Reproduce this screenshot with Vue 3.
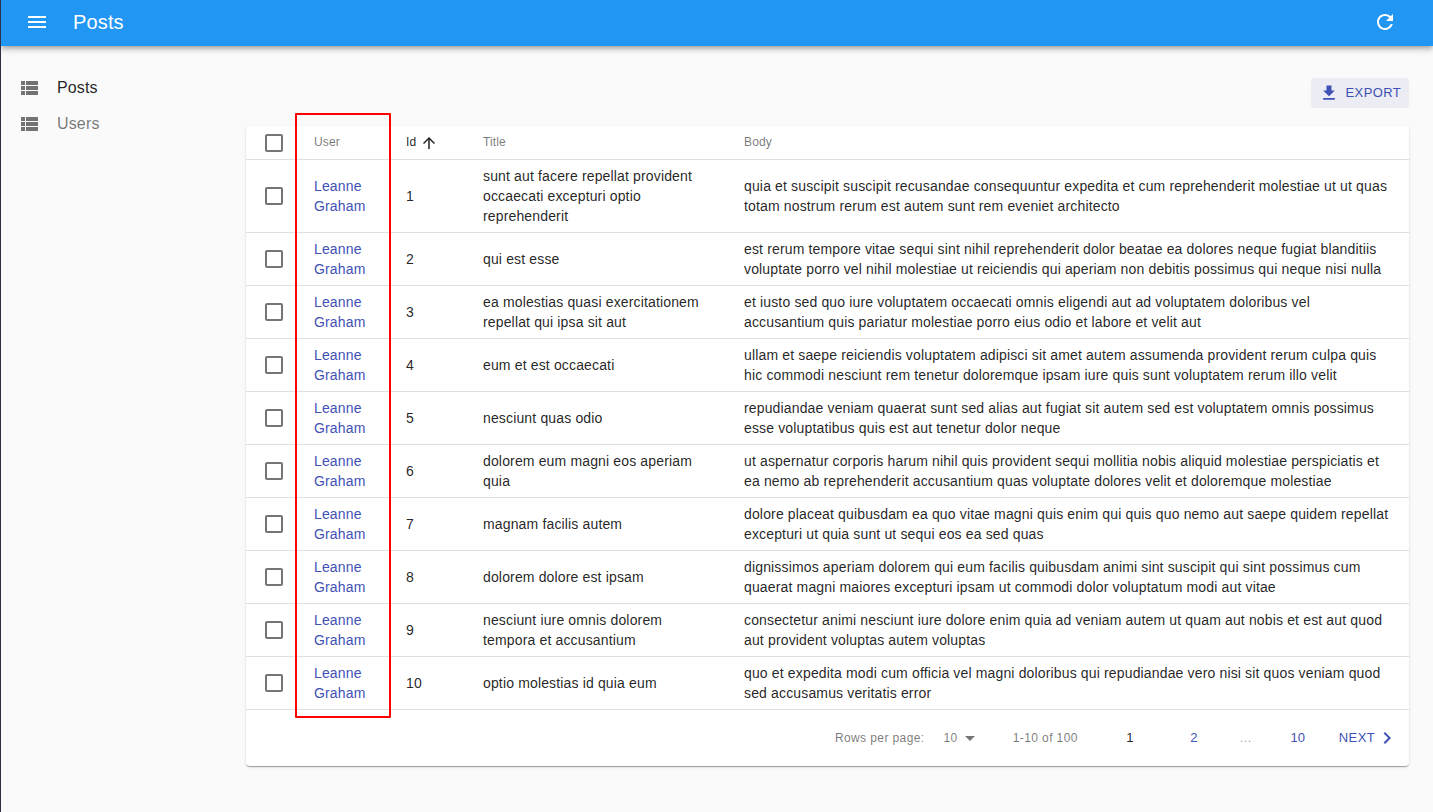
<script setup>
const posts = [
  { id: 1, title: 'sunt aut facere repellat provident occaecati excepturi optio reprehenderit', body: 'quia et suscipit suscipit recusandae consequuntur expedita et cum reprehenderit molestiae ut ut quas totam nostrum rerum est autem sunt rem eveniet architecto' },
  { id: 2, title: 'qui est esse', body: 'est rerum tempore vitae sequi sint nihil reprehenderit dolor beatae ea dolores neque fugiat blanditiis voluptate porro vel nihil molestiae ut reiciendis qui aperiam non debitis possimus qui neque nisi nulla' },
  { id: 3, title: 'ea molestias quasi exercitationem repellat qui ipsa sit aut', body: 'et iusto sed quo iure voluptatem occaecati omnis eligendi aut ad voluptatem doloribus vel accusantium quis pariatur molestiae porro eius odio et labore et velit aut' },
  { id: 4, title: 'eum et est occaecati', body: 'ullam et saepe reiciendis voluptatem adipisci sit amet autem assumenda provident rerum culpa quis hic commodi nesciunt rem tenetur doloremque ipsam iure quis sunt voluptatem rerum illo velit' },
  { id: 5, title: 'nesciunt quas odio', body: 'repudiandae veniam quaerat sunt sed alias aut fugiat sit autem sed est voluptatem omnis possimus esse voluptatibus quis est aut tenetur dolor neque' },
  { id: 6, title: 'dolorem eum magni eos aperiam quia', body: 'ut aspernatur corporis harum nihil quis provident sequi mollitia nobis aliquid molestiae perspiciatis et ea nemo ab reprehenderit accusantium quas voluptate dolores velit et doloremque molestiae' },
  { id: 7, title: 'magnam facilis autem', body: 'dolore placeat quibusdam ea quo vitae magni quis enim qui quis quo nemo aut saepe quidem repellat excepturi ut quia sunt ut sequi eos ea sed quas' },
  { id: 8, title: 'dolorem dolore est ipsam', body: 'dignissimos aperiam dolorem qui eum facilis quibusdam animi sint suscipit qui sint possimus cum quaerat magni maiores excepturi ipsam ut commodi dolor voluptatum modi aut vitae' },
  { id: 9, title: 'nesciunt iure omnis dolorem tempora et accusantium', body: 'consectetur animi nesciunt iure dolore enim quia ad veniam autem ut quam aut nobis et est aut quod aut provident voluptas autem voluptas' },
  { id: 10, title: 'optio molestias id quia eum', body: 'quo et expedita modi cum officia vel magni doloribus qui repudiandae vero nisi sit quos veniam quod sed accusamus veritatis error' },
]
const boxPath = 'M19 5v14H5V5h14m0-2H5c-1.1 0-2 .9-2 2v14c0 1.1.9 2 2 2h14c1.1 0 2-.9 2-2V5c0-1.1-.9-2-2-2z'
const listPath = 'M4 14h4v-4H4v4zm0 5h4v-4H4v4zM4 9h4V5H4v4zm5 5h12v-4H9v4zm0 5h12v-4H9v4zM9 5v4h12V5H9z'
const navItems = [
  { label: 'Posts', active: true },
  { label: 'Users', active: false },
]
</script>

<template>
  <div class="page">
    <header class="appbar">
      <svg class="menu-icon" viewBox="0 0 24 24" width="24" height="24"><path d="M3 18h18v-2H3v2zm0-5h18v-2H3v2zm0-7v2h18V6H3z" /></svg>
      <h1 class="appbar-title">Posts</h1>
      <svg class="refresh-icon" viewBox="0 0 24 24" width="24" height="24"><path d="M17.65 6.35C16.2 4.9 14.21 4 12 4c-4.42 0-7.99 3.58-7.99 8s3.57 8 7.99 8c3.73 0 6.84-2.55 7.73-6h-2.08c-.82 2.33-3.04 4-5.65 4-3.31 0-6-2.69-6-6s2.69-6 6-6c1.66 0 3.14.69 4.22 1.78L13 11h7V4l-2.35 2.35z" /></svg>
    </header>

    <div class="main">
      <nav class="sidebar">
        <div v-for="item in navItems" :key="item.label" class="nav-item" :class="{ active: item.active }">
          <svg viewBox="0 0 24 24" width="24" height="24"><path :d="listPath" /></svg>
          <span>{{ item.label }}</span>
        </div>
      </nav>

      <section class="content">
        <div class="actions">
          <button class="export">
            <svg viewBox="0 0 24 24" width="20" height="20"><path d="M19 9h-4V3H9v6H5l7 7 7-7zM5 18v2h14v-2H5z" /></svg>
            <span class="export-label">Export</span>
          </button>
        </div>

        <div class="card">
          <table>
            <colgroup>
              <col class="c-check" />
              <col class="c-user" />
              <col class="c-id" />
              <col class="c-title" />
              <col />
            </colgroup>
            <thead>
              <tr>
                <th class="check"><svg viewBox="0 0 24 24" width="24" height="24"><path :d="boxPath" /></svg></th>
                <th>User</th>
                <th class="sorted">
                  <span class="sort-label">Id<svg viewBox="0 0 24 24" width="18" height="18"><path d="M4 12l1.41 1.41L11 7.83V20h2V7.83l5.58 5.59L20 12l-8-8-8 8z" /></svg></span>
                </th>
                <th>Title</th>
                <th>Body</th>
              </tr>
            </thead>
            <tbody>
              <tr v-for="post in posts" :key="post.id">
                <td class="check"><svg viewBox="0 0 24 24" width="24" height="24"><path :d="boxPath" /></svg></td>
                <td class="user">Leanne Graham</td>
                <td>{{ post.id }}</td>
                <td>{{ post.title }}</td>
                <td class="body-cell">{{ post.body }}</td>
              </tr>
            </tbody>
          </table>

          <footer class="pager">
            <span class="rows-label">Rows per page:</span>
            <span class="rows-select">10<svg viewBox="0 0 24 24" width="24" height="24"><path d="M7 10l5 5 5-5z" /></svg></span>
            <span class="range">1-10 of 100</span>
            <button class="page-btn current">1</button>
            <button class="page-btn">2</button>
            <span class="ellipsis">...</span>
            <button class="page-btn">10</button>
            <button class="next">Next<svg viewBox="0 0 24 24" width="24" height="24"><path d="M10 6L8.59 7.41 13.17 12l-4.58 4.59L10 18l6-6z" /></svg></button>
          </footer>
        </div>
      </section>
    </div>

    <div class="highlight"></div>
  </div>
</template>

<style scoped>
.page {
  position: relative;
  height: 812px;
  overflow: hidden;
  box-sizing: border-box;
  border-left: 1px solid #2c2f45;
  background: #fafafa;
  font-family: "Liberation Sans", Arial, sans-serif;
  color: rgba(0, 0, 0, 0.87);
}
.appbar {
  position: relative;
  display: flex;
  align-items: center;
  box-sizing: border-box;
  height: 46px;
  padding: 0 36px 2px 24px;
  background: #2196f3;
  color: #fff;
  box-shadow: 0 2px 4px -1px rgba(0, 0, 0, 0.2), 0 4px 5px 0 rgba(0, 0, 0, 0.14), 0 1px 10px 0 rgba(0, 0, 0, 0.12);
}
.appbar svg { fill: #fff; flex: none; }
.appbar-title {
  margin: 0 0 0 24px;
  font-size: 20px;
  font-weight: 400;
  line-height: 1.4;
  letter-spacing: 0.0075em;
  flex: 1;
}
.main { display: flex; }
.sidebar {
  flex: none;
  width: 245px;
  padding-top: 24px;
  box-sizing: border-box;
}
.nav-item {
  display: flex;
  align-items: center;
  gap: 16px;
  height: 36px;
  padding-left: 16px;
  font-size: 16px;
  letter-spacing: 0.00938em;
  color: rgba(0, 0, 0, 0.54);
}
.nav-item.active { color: rgba(0, 0, 0, 0.87); }
.nav-item svg { fill: rgba(0, 0, 0, 0.54); flex: none; }
.content {
  flex: 1;
  min-width: 0;
  padding: 32px 24px 0 0;
}
.actions {
  display: flex;
  justify-content: flex-end;
  margin-bottom: 18px;
}
button {
  font-family: inherit;
  border: 0;
  background: none;
  cursor: pointer;
}
.export {
  display: flex;
  align-items: center;
  gap: 7px;
  height: 30px;
  padding: 0 8px;
  border-radius: 4px;
  background: rgba(63, 81, 181, 0.08);
  color: #3f51b5;
  font-size: 13px;
  letter-spacing: 0.02857em;
  text-transform: uppercase;
}
.export-label { margin-bottom: 2px; }
.export svg { fill: #3f51b5; }
.card {
  background: #fff;
  border-radius: 4px;
  box-shadow: 0 2px 1px -1px rgba(0, 0, 0, 0.2), 0 1px 1px 0 rgba(0, 0, 0, 0.14), 0 1px 3px 0 rgba(0, 0, 0, 0.12);
}
table {
  width: 100%;
  border-collapse: collapse;
  table-layout: fixed;
}
.c-check { width: 52px; }
.c-user { width: 92px; }
.c-id { width: 77px; }
.c-title { width: 261px; }
th, td {
  padding: 6px 16px;
  border-bottom: 1px solid #e0e0e0;
  text-align: left;
  vertical-align: middle;
  font-size: 14px;
  line-height: 20px;
  font-weight: 400;
  letter-spacing: 0.01071em;
}
th {
  padding: 6px 16px 7px;
  font-size: 12px;
  color: rgba(0, 0, 0, 0.54);
}
th.sorted { color: rgba(0, 0, 0, 0.87); }
.sort-label { display: inline-flex; align-items: center; gap: 4px; vertical-align: top; }
.sort-label svg { fill: rgba(0, 0, 0, 0.87); margin-top: 1px; }
.check { padding: 0 0 0 16px; }
.check svg { display: block; fill: rgba(0, 0, 0, 0.54); }
.user { color: #3f51b5; padding-right: 24px; }
.pager {
  display: flex;
  align-items: center;
  justify-content: flex-end;
  height: 56px;
  box-sizing: border-box;
  padding: 0 10px 2px 0;
  font-size: 12px;
  letter-spacing: 0.03333em;
  color: rgba(0, 0, 0, 0.54);
}
.rows-label, .range { margin-top: 2px; }
.rows-select {
  display: flex;
  align-items: center;
  margin: 2px 0 0 19px;
}
.rows-select svg { fill: rgba(0, 0, 0, 0.54); margin-right: -1px; }
.range { margin-right: 20px; margin-left: 32px; }
.page-btn {
  width: 64px;
  padding: 0;
  font-size: 13px;
  color: #3f51b5;
  text-align: center;
}
.page-btn.current { color: rgba(0, 0, 0, 0.87); }
.ellipsis { width: 40px; text-align: center; font-size: 13px; opacity: 0.7; }
.next {
  display: flex;
  align-items: center;
  padding: 0 0 0 9px;
  font-size: 13px;
  letter-spacing: 0.02857em;
  color: #3f51b5;
  text-transform: uppercase;
}
.next svg { fill: #3f51b5; margin-top: 2px; }
.highlight {
  position: absolute;
  left: 294px;
  top: 113px;
  width: 96px;
  height: 605px;
  box-sizing: border-box;
  border: 2px solid #f00;
  border-radius: 1px;
}
</style>

<style>
html, body { margin: 0; background: #fafafa; }
</style>
